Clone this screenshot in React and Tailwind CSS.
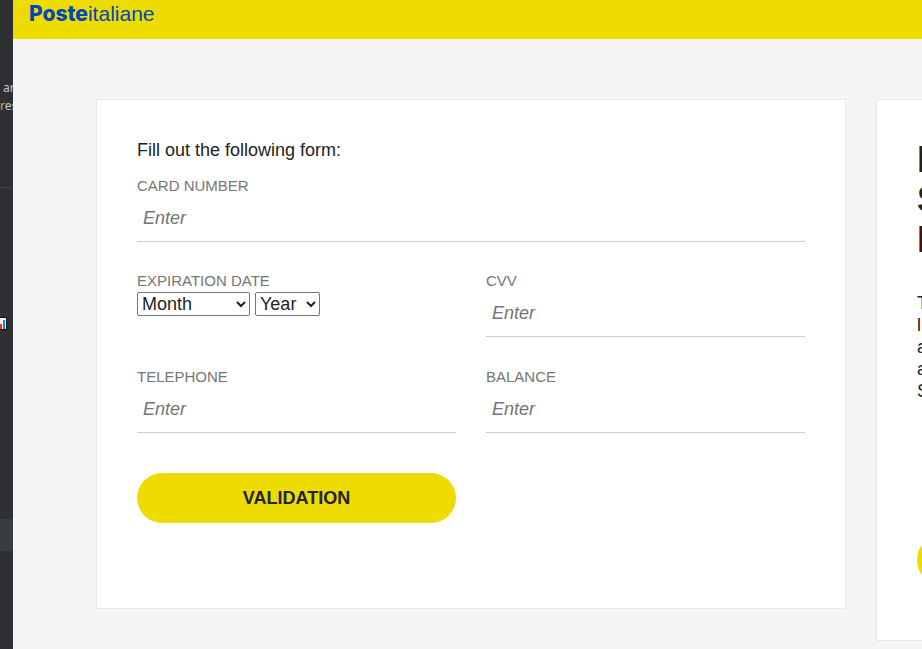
import React from "react";

function Field({ id, label }) {
  return (
    <div className="flex flex-col">
      <label htmlFor={id} className="text-[15px] leading-5 text-[#767676]">
        {label}
      </label>
      <input
        id={id}
        type="text"
        placeholder="Enter"
        autoComplete="off"
        className="h-[46px] w-full border-b border-[#cccccc] bg-transparent px-1.5 text-lg italic text-[#222] outline-none placeholder:text-[#757575]"
      />
    </div>
  );
}

function Picker({ id, label, width }) {
  return (
    <div className={`relative h-6 ${width}`}>
      <select
        id={id}
        aria-label={label}
        className="block h-6 w-full appearance-none rounded-[2px] border border-[#767676] bg-white pl-1 text-lg leading-5 text-[#222]"
      >
        <option>{label}</option>
      </select>
      <svg
        className="pointer-events-none absolute right-1 top-2 h-2 w-2.5"
        viewBox="0 0 10 8"
        fill="none"
        stroke="#222"
        strokeWidth="2"
        aria-hidden="true"
      >
        <path d="M1 2l4 4 4-4" />
      </svg>
    </div>
  );
}

function BackgroundPanel() {
  return (
    <div className="w-[13px] shrink-0 overflow-hidden whitespace-nowrap bg-[#2f3034] font-['Noto_Sans',sans-serif] text-xs text-[#c8c8c8]">
      <div className="h-[188px] border-b border-[#414247] pt-[79px] leading-[18px]">
        <p className="pl-[3px]">are</p>
        <p>
          <span className="text-[#d9a860]">r</span>es
        </p>
      </div>
      <div className="h-[331px] pt-[129px]">
        <svg width="7" height="13" viewBox="0 0 7 13" aria-hidden="true">
          <path d="M0 0h7v13H0z" fill="#111" />
          <path d="M0 1h6v11H0z" fill="#f2f2f2" />
          <path d="M0 7h2v5H0z" fill="#f03a17" />
          <path d="M3 3h2v9H3z" fill="#1683d8" />
        </svg>
      </div>
      <div className="h-8 bg-[#3a3c43]" />
    </div>
  );
}

function Notice() {
  return (
    <aside className="h-[542px] w-[46px] shrink-0 overflow-hidden whitespace-nowrap border-y border-l border-[#e8e8e8] bg-white pl-10 pt-10 text-[#222]">
      <h2 className="text-4xl font-bold leading-10">
        <span className="block">P</span>
        <span className="block">S</span>
        <span className="block text-[#4a1014]">P</span>
      </h2>
      <p className="mt-8 text-lg leading-[22px]">
        <span className="block">T</span>
        <span className="block">l</span>
        <span className="block">a</span>
        <span className="block">a</span>
        <span className="block">S</span>
      </p>
      <div className="mt-[133px] h-[50px] w-80 rounded-full bg-[#eedc00]" />
    </aside>
  );
}

export default function App() {
  return (
    <div className="flex min-h-screen overflow-hidden bg-[#f5f5f5] font-['Liberation_Sans',Arial,sans-serif]">
      <BackgroundPanel />
      <div className="flex min-w-0 flex-1 flex-col">
        <header className="h-[39px] bg-[#eedc00] pl-4 text-[21px] leading-7 text-[#0047bb]">
          <span className="font-['Inter',sans-serif] font-extrabold">Poste</span>
          <span>italiane</span>
        </header>
        <main className="flex items-start gap-[30px] pl-[83px] pt-[60px]">
          <section className="h-[510px] min-w-0 flex-1 border border-[#e8e8e8] bg-white p-10">
            <h1 className="pb-4 text-lg leading-5 text-[#222]">
              Fill out the following form:
            </h1>
            <Field id="card" label="CARD NUMBER" />
            <div className="mt-[29px] grid grid-cols-2 gap-x-[30px] gap-y-[30px]">
              <div>
                <label htmlFor="month" className="block text-[15px] leading-5 text-[#767676]">
                  EXPIRATION DATE
                </label>
                <div className="flex gap-[5px] pt-px">
                  <Picker id="month" label="Month" width="w-[113px]" />
                  <Picker id="year" label="Year" width="w-[65px]" />
                </div>
              </div>
              <Field id="cvv" label="CVV" />
              <Field id="telephone" label="TELEPHONE" />
              <Field id="balance" label="BALANCE" />
              <button
                type="button"
                className="mt-2.5 h-[50px] rounded-full bg-[#eedc00] text-lg font-bold text-[#222]"
              >
                VALIDATION
              </button>
            </div>
          </section>
          <Notice />
        </main>
      </div>
    </div>
  );
}
